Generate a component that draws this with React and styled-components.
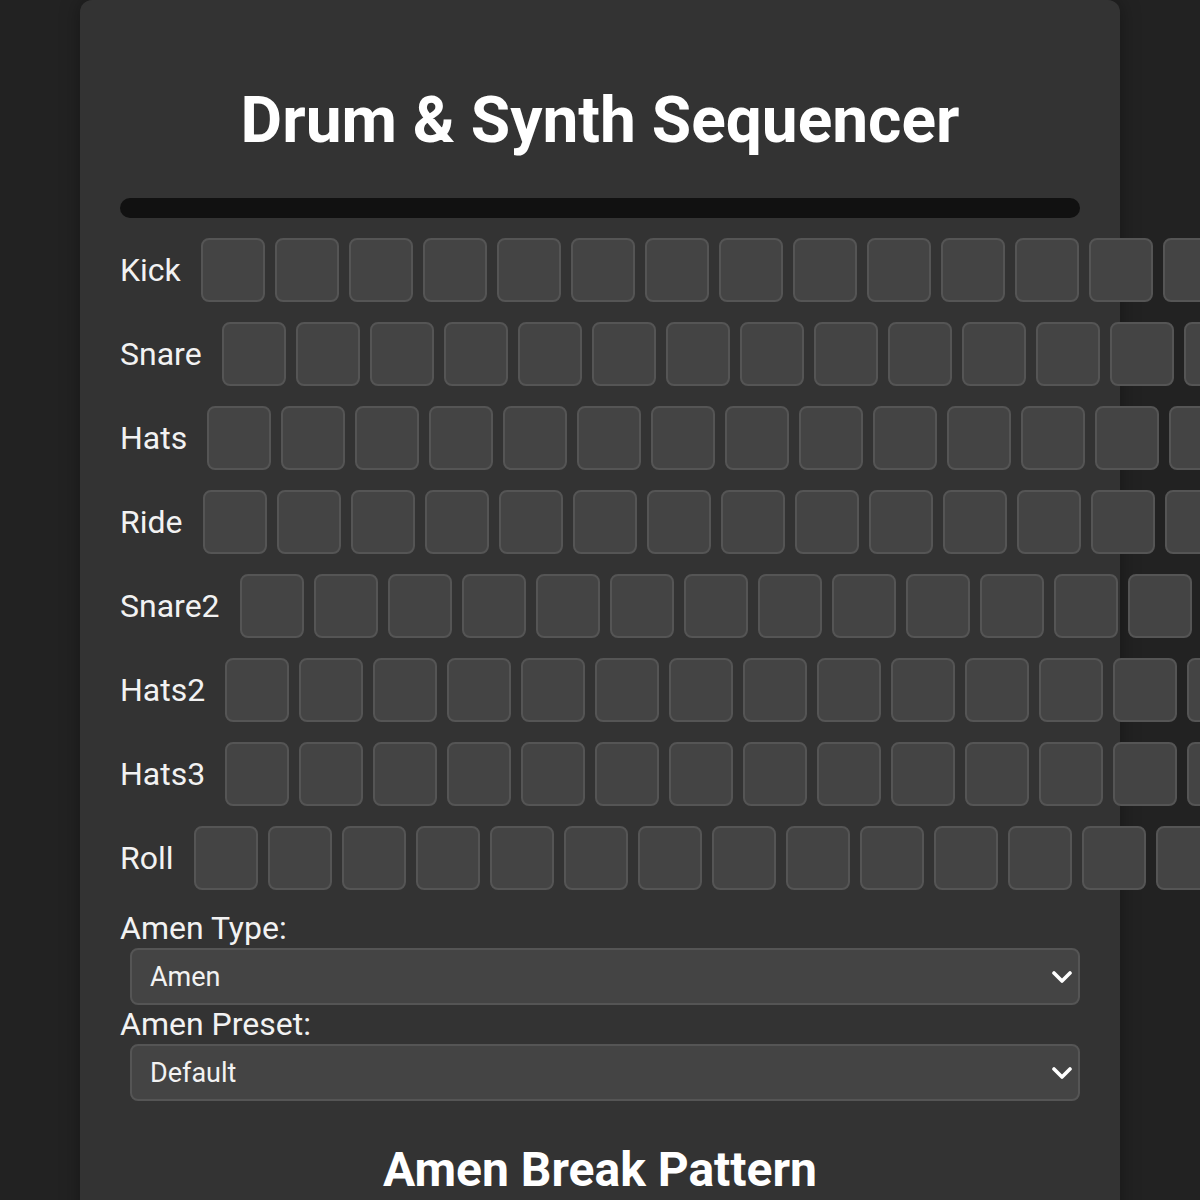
import React from 'react'
import styled, { createGlobalStyle } from 'styled-components'

const GlobalStyle = createGlobalStyle`
    html, body {
        margin: 0;
        padding: 0;
        background-color: #222;
        overflow: hidden;
        font-family: Roboto, "Liberation Sans", sans-serif;
        color: #fff;
    }
`

const tracks = ['Kick', 'Snare', 'Hats', 'Ride', 'Snare2', 'Hats2', 'Hats3', 'Roll']
const STEPS = 16

const ChevronIcon = () => (
    <svg width="20" height="14" viewBox="0 0 20 14">
        <polyline points="2,3 10,11 18,3" fill="none" stroke="#fff" strokeWidth="3.6" strokeLinecap="round" strokeLinejoin="round" />
    </svg>
)

const Dropdown = ({ label, value, options }) => (
    <>
        <FieldLabel>{label}</FieldLabel>
        <SelectWrap>
            <Select defaultValue={value}>
                {options.map(o => <option key={o}>{o}</option>)}
            </Select>
            <Arrow><ChevronIcon /></Arrow>
        </SelectWrap>
    </>
)

const App = () => {
    return (
        <>
            <GlobalStyle />
            <Container>
                <Title>Drum &amp; Synth Sequencer</Title>
                <Progress />
                <Tracks>
                    {tracks.map(name => (
                        <Row key={name}>
                            <TrackName>{name}</TrackName>
                            {Array.from({ length: STEPS }).map((_, i) => <Step key={i} />)}
                        </Row>
                    ))}
                </Tracks>
                <Dropdown label="Amen Type:" value="Amen" options={['Amen', 'Think', 'Apache']} />
                <Dropdown label="Amen Preset:" value="Default" options={['Default', 'Jungle', 'Breakcore']} />
                <SubTitle>Amen Break Pattern</SubTitle>
            </Container>
        </>
    )
}

export default App

const Container = styled.div`
    width: 1040px;
    margin: 0 auto;
    box-sizing: border-box;
    padding: 40px;
    background-color: #333;
    border-radius: 12px;
    box-shadow: 0 0 20px rgba(0, 0, 0, 0.35);
    min-height: 1300px;
`

const Title = styled.h1`
    font-size: 64px;
    font-weight: 700;
    text-align: center;
    margin: 43px 0 40px;
    line-height: 75px;
    color: #fff;
`

const Progress = styled.div`
    height: 20px;
    border-radius: 10px;
    background-color: #111;
    margin-bottom: 20px;
`

const Tracks = styled.div`
    display: flex;
    flex-direction: column;
    gap: 20px;
    margin-bottom: 20px;
`

const Row = styled.div`
    display: flex;
    align-items: center;
    gap: 10px;
`

const TrackName = styled.span`
    font-size: 32px;
    color: #f2f2f2;
    margin-right: 10px;
    flex-shrink: 0;
`

const Step = styled.div`
    flex-shrink: 0;
    width: 64px;
    height: 64px;
    box-sizing: border-box;
    background-color: #444;
    border: 2px solid #555;
    border-radius: 8px;
`

const FieldLabel = styled.label`
    display: block;
    font-size: 32px;
    line-height: 37px;
    color: #f2f2f2;
`

const SelectWrap = styled.div`
    position: relative;
    margin: 1px 0 1px 10px;
`

const Select = styled.select`
    display: block;
    width: 100%;
    height: 57px;
    box-sizing: border-box;
    appearance: none;
    -webkit-appearance: none;
    background-color: #444;
    color: #f2f2f2;
    border: 2px solid #555;
    border-radius: 8px;
    padding: 0 18px;
    font-family: Roboto, "Liberation Sans", sans-serif;
    font-size: 27px;
    outline: none;
`

const Arrow = styled.span`
    position: absolute;
    right: 8px;
    top: 50%;
    transform: translateY(-50%);
    display: flex;
    pointer-events: none;
`

const SubTitle = styled.h2`
    font-size: 48px;
    font-weight: 700;
    text-align: center;
    margin: 40px 0 0;
    color: #fff;
`
